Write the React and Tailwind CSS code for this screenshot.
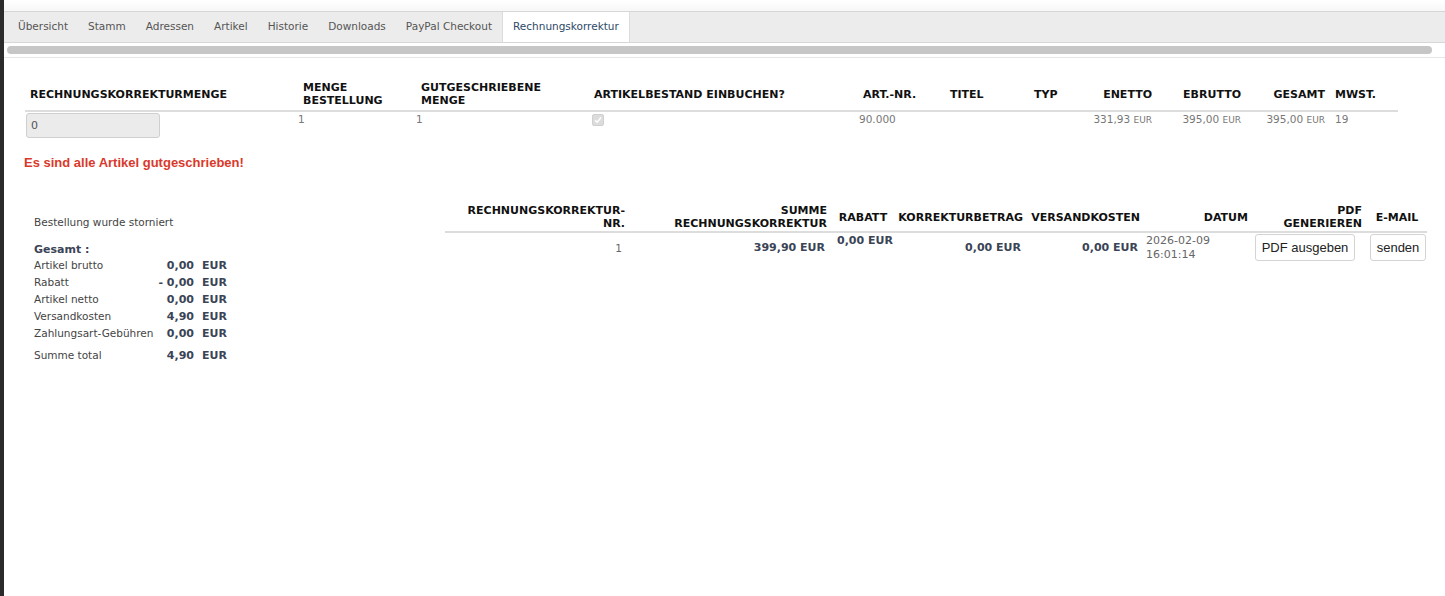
import React from "react";

const DJ = "font-['DejaVu_Sans',Verdana,sans-serif]";
const LS = "font-['Liberation_Sans',Arial,sans-serif]";

const tabs = ["Übersicht", "Stamm", "Adressen", "Artikel", "Historie", "Downloads", "PayPal Checkout", "Rechnungskorrektur"];

function Th({ children, className = "" }) {
  return (
    <div className={`${DJ} font-bold text-[11px] leading-[13px] text-[#111] uppercase flex items-center ${className}`}>
      {children}
    </div>
  );
}

function Eur({ v }) {
  return (
    <span className="whitespace-nowrap">
      {v} <span className="text-[9px]">EUR</span>
    </span>
  );
}

export default function App() {
  return (
    <div className="flex w-[1445px] min-h-[596px] bg-white">
      <div className="w-[4px] shrink-0 bg-[#2b2b2b]" />
      <div className="flex-1 flex flex-col">
        <div className="h-[11px] bg-gradient-to-b from-white to-[#f7f7f7]" />
        {/* tab bar */}
        <div className="h-[32px] flex bg-[#ececec] border-y border-[#d6d6d6] pl-[4px]">
          {tabs.map((t, i) => {
            const active = i === tabs.length - 1;
            return (
              <div
                key={t}
                className={`${DJ} text-[10.5px] px-[10px] flex items-center whitespace-nowrap ${
                  active ? "bg-white text-[#2d4a68] border-x border-[#dcdcdc]" : "text-[#555]"
                }`}
              >
                {t}
              </div>
            );
          })}
        </div>
        {/* progress */}
        <div className="pt-[3px] pb-[3px] border-b border-[#e6e6e6]">
          <div className="ml-[3px] w-[1425px] h-[8px] rounded-full bg-[#c6c6c6]" />
        </div>

        {/* first table */}
        <div className="ml-[21px] mt-[20px] w-[1373px]">
          <div className="grid grid-cols-[273px_118px_173px_266px_90px_84px_36px_92px_89px_84px_68px] h-[34px] border-b-2 border-[#dddddd]">
            <Th className="pl-[5px]">Rechnungskorrekturmenge</Th>
            <Th className="pl-[5px]"><span>Menge<br />Bestellung</span></Th>
            <Th className="pl-[5px]"><span>Gutgeschriebene<br />Menge</span></Th>
            <Th className="pl-[5px]">Artikelbestand einbuchen?</Th>
            <Th className="pl-[8px]">Art.-Nr.</Th>
            <Th className="pl-[5px]">Titel</Th>
            <Th className="pl-[5px]">Typ</Th>
            <Th className="justify-end pr-[5px]">Enetto</Th>
            <Th className="justify-end pr-[5px]">Ebrutto</Th>
            <Th className="justify-end pr-[5px]">Gesamt</Th>
            <Th className="pl-[5px]">MwSt.</Th>
          </div>
          <div className={`grid grid-cols-[273px_118px_173px_266px_90px_84px_36px_92px_89px_84px_68px] h-[27px] ${DJ} text-[10.5px] leading-[14px] text-[#777]`}>
            <div className="pl-[1px] pt-[1px]">
              <div className="w-[134px] h-[25px] rounded-[3px] border border-[#cfcfcf] bg-[#ebebeb] flex items-center pl-[4px] text-[#555] text-[11px]">
                0
              </div>
            </div>
            <div>1</div>
            <div>1</div>
            <div className="pl-[3px] pt-[2px]">
              <div className="w-[12px] h-[12px] rounded-[2px] bg-[#dcdcdc] border border-[#d0d0d0] flex items-center justify-center">
                <svg width="8" height="8" viewBox="0 0 8 8">
                  <path d="M1 4.2 L3.1 6.2 L7 1.6" fill="none" stroke="#fff" strokeWidth="1.5" />
                </svg>
              </div>
            </div>
            <div className="pl-[4px]">90.000</div>
            <div />
            <div />
            <div className="text-right pr-[5px]"><Eur v="331,93" /></div>
            <div className="text-right pr-[5px]"><Eur v="395,00" /></div>
            <div className="text-right pr-[5px]"><Eur v="395,00" /></div>
            <div className="pl-[5px]">19</div>
          </div>
        </div>

        <div className={`${LS} font-bold text-[13px] leading-[16px] text-[#d9392b] ml-[20px] mt-[16px]`}>
          Es sind alle Artikel gutgeschrieben!
        </div>

        {/* lower section */}
        <div className="flex mt-[32px] pl-[30px]">
          <div className={`w-[411px] shrink-0 pt-[12px] ${DJ} text-[10.5px] text-[#444]`}>
            <div className="leading-[14px]">Bestellung wurde storniert</div>
            <div className="mt-[14px] leading-[14px] font-bold text-[11px] text-[#3a4456]">Gesamt :</div>
            <div className="grid grid-cols-[124px_36px_auto] leading-[17px]">
              {[
                ["Artikel brutto", "0,00"],
                ["Rabatt", "- 0,00"],
                ["Artikel netto", "0,00"],
                ["Versandkosten", "4,90"],
                ["Zahlungsart-Gebühren", "0,00"],
              ].map(([l, v]) => (
                <React.Fragment key={l}>
                  <div className="whitespace-nowrap">{l}</div>
                  <div className="text-right whitespace-nowrap font-bold text-[11px] text-[#3a4456] flex justify-end">{v}</div>
                  <div className="pl-[8px] font-bold text-[11px] text-[#3a4456]">EUR</div>
                </React.Fragment>
              ))}
              <div className="mt-[5px]">Summe total</div>
              <div className="mt-[5px] text-right font-bold text-[11px] text-[#3a4456]">4,90</div>
              <div className="mt-[5px] pl-[8px] font-bold text-[11px] text-[#3a4456]">EUR</div>
            </div>
          </div>

          <div className="w-[982px]">
            <div className="grid grid-cols-[185px_202px_62px_134px_117px_108px_114px_60px] h-[30px] border-b-2 border-[#dddddd]">
              <Th className="justify-end text-right pr-[5px]"><span>Rechnungskorrektur-<br />Nr.</span></Th>
              <Th className="justify-end text-right pr-[5px]"><span>Summe<br />Rechnungskorrektur</span></Th>
              <Th className="justify-center">Rabatt</Th>
              <Th className="justify-end pr-[5px]">Korrekturbetrag</Th>
              <Th className="justify-end pr-[5px]">Versandkosten</Th>
              <Th className="justify-end pr-[5px]">Datum</Th>
              <Th className="justify-end text-right pr-[5px]"><span>PDF<br />generieren</span></Th>
              <Th className="justify-center">E-Mail</Th>
            </div>
            <div className={`grid grid-cols-[185px_202px_62px_134px_117px_108px_114px_60px] ${DJ} text-[10.5px] leading-[14px]`}>
              <div className="text-right pr-[8px] pt-[8px] text-[#666]">1</div>
              <div className="text-right pr-[7px] pt-[8px] font-bold text-[11px] text-[#3a4456] whitespace-nowrap">399,90 EUR</div>
              <div className="pl-[5px] pt-[1px] font-bold text-[11px] text-[#3a4456] whitespace-nowrap">0,00 EUR</div>
              <div className="text-right pr-[7px] pt-[8px] font-bold text-[11px] text-[#3a4456] whitespace-nowrap">0,00 EUR</div>
              <div className="text-right pr-[7px] pt-[8px] font-bold text-[11px] text-[#3a4456] whitespace-nowrap">0,00 EUR</div>
              <div className="pl-[1px] pt-[1px] text-[11px] text-[#666]">
                2026-02-09<br />16:01:14
              </div>
              <div className="pl-[2px] pt-[1px]">
                <div className={`${LS} w-[100px] h-[27px] rounded-[3px] border border-[#d4d4d4] bg-white flex items-center justify-center text-[13px] text-[#222]`}>
                  PDF ausgeben
                </div>
              </div>
              <div className="pl-[3px] pt-[1px]">
                <div className={`${LS} w-[56px] h-[27px] rounded-[3px] border border-[#d4d4d4] bg-white flex items-center justify-center text-[13px] text-[#222]`}>
                  senden
                </div>
              </div>
            </div>
          </div>
        </div>
      </div>
    </div>
  );
}
